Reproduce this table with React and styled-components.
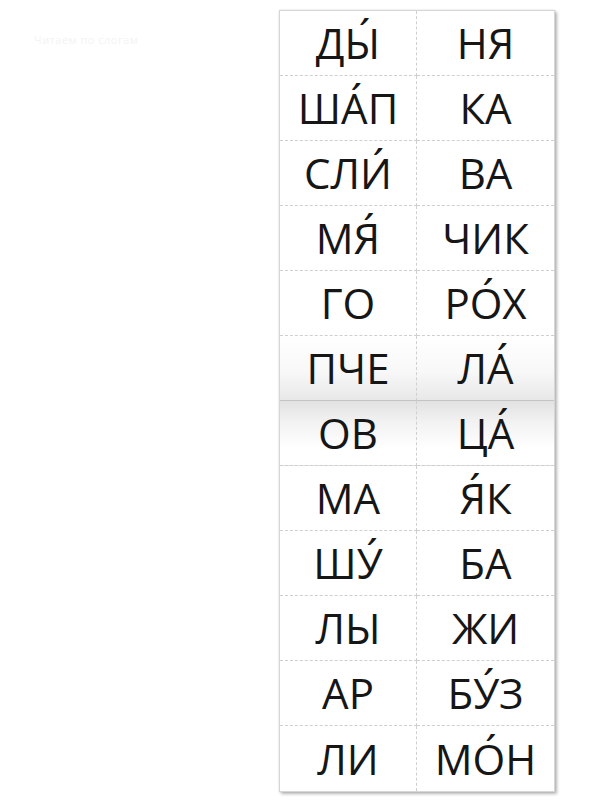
import React from 'react';
import styled, { createGlobalStyle } from 'styled-components';

const GlobalStyle = createGlobalStyle`
  html, body {
    margin: 0;
    padding: 0;
    background: #ffffff;
  }
  body {
    font-family: "Open Sans", "Noto Sans", sans-serif;
  }
`;

const Page = styled.div`
  width: 600px;
  height: 800px;
  display: flex;
  align-items: flex-start;
  padding: 10px 0 0 34px;
  box-sizing: border-box;
`;

const Ghost = styled.div`
  width: 245px;
  padding-top: 22px;
  font-size: 11px;
  color: #f3f3f3;
  letter-spacing: 0.5px;
`;

const Card = styled.div`
  display: grid;
  grid-template-columns: 137px 137px;
  grid-template-rows: repeat(12, 65px);
  background: #ffffff;
  border: 1px solid #d6d6d6;
  box-shadow: 2px 2px 3px rgba(0, 0, 0, 0.28), 0 0 2px rgba(0, 0, 0, 0.12);
`;

const Cell = styled.div`
  display: flex;
  align-items: center;
  justify-content: center;
  font-size: 42px;
  line-height: 1;
  color: #161616;
  box-sizing: border-box;
  border-right: ${({ $left }) => ($left ? '1px dashed #cfcfcf' : 'none')};
  border-bottom: ${({ $fold, $last }) =>
    $last ? 'none' : $fold ? '1px solid #c4c4c4' : '1px dashed #cfcfcf'};
  background: ${({ $shade }) =>
    $shade === 'above'
      ? 'linear-gradient(to bottom, #ffffff 0%, #f8f8f8 55%, #e8e8e8 100%)'
      : $shade === 'below'
      ? 'linear-gradient(to bottom, #e2e2e2 0%, #f3f3f3 35%, #ffffff 75%)'
      : '#ffffff'};
`;

const rows = [
  ['ДЫ́', 'НЯ'],
  ['ША́П', 'КА'],
  ['СЛИ́', 'ВА'],
  ['МЯ́', 'ЧИК'],
  ['ГО', 'РО́Х'],
  ['ПЧЕ', 'ЛА́'],
  ['ОВ', 'ЦА́'],
  ['МА', 'Я́К'],
  ['ШУ́', 'БА'],
  ['ЛЫ', 'ЖИ'],
  ['АР', 'БУ́З'],
  ['ЛИ', 'МО́Н'],
];

export default function App() {
  return (
    <>
      <GlobalStyle />
      <Page>
        <Ghost>Читаем по слогам</Ghost>
        <Card>
          {rows.map((pair, i) =>
            pair.map((syl, j) => (
              <Cell
                key={`${i}-${j}`}
                $left={j === 0}
                $fold={i === 5}
                $last={i === rows.length - 1}
                $shade={i === 5 ? 'above' : i === 6 ? 'below' : null}
              >
                {syl}
              </Cell>
            ))
          )}
        </Card>
      </Page>
    </>
  );
}
